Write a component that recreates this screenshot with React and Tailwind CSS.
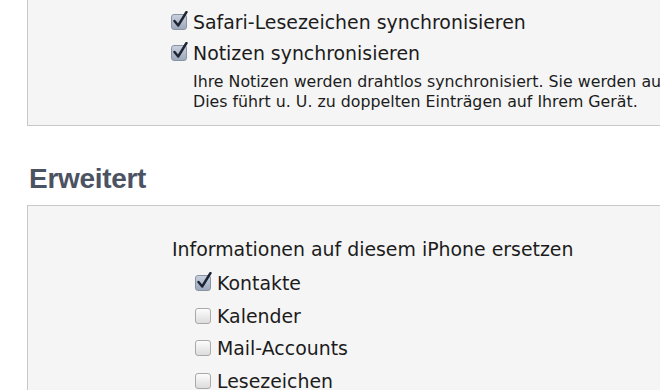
import React from 'react';

const Box = ({ checked }) => (
  <span className="relative inline-block w-[16px] h-[16px] shrink-0">
    <span
      className={
        checked
          ? 'absolute inset-0 rounded-[3px] border border-[#8a93a3] bg-gradient-to-b from-[#c9d1dd] to-[#9ca8bc]'
          : 'absolute inset-0 rounded-[3px] border border-[#a9a9a9] bg-gradient-to-b from-[#fdfdfd] to-[#dcdcdc]'
      }
    />
    {checked && (
      <svg className="absolute left-[2px] top-[-3px]" width="15" height="17" viewBox="0 0 15 17">
        <path d="M1.5 10 L5.2 14.5 L13.5 1" fill="none" stroke="#1d2433" strokeWidth="2.4" strokeLinecap="round" strokeLinejoin="round" />
      </svg>
    )}
  </span>
);

const Row = ({ checked, label, className = '' }) => (
  <div className={`flex items-center gap-[6px] ${className}`}>
    <Box checked={checked} />
    <span>{label}</span>
  </div>
);

export default function App() {
  return (
    <div className="w-[660px] h-[390px] overflow-hidden bg-white text-[#1c1c1c] text-[18.9px] font-['DejaVu_Sans',sans-serif]">
      <div className="ml-[27px] -mt-px h-[127px] border border-[#c8c8c8] border-r-0 bg-[#f5f5f5] pl-[143px] pt-[10px] whitespace-nowrap">
        <Row checked label="Safari-Lesezeichen synchronisieren" className="h-[24px]" />
        <Row checked label="Notizen synchronisieren" className="h-[24px] mt-[7px]" />
        <div className="pl-[22px] mt-[7px] text-[15.8px] leading-[20px]">
          <div>Ihre Notizen werden drahtlos synchronisiert. Sie werden auf</div>
          <div>Dies führt u. U. zu doppelten Einträgen auf Ihrem Gerät.</div>
        </div>
      </div>

      <h2 className="ml-[29px] mt-[33px] h-[40px] text-[28px] font-bold tracking-[-0.3px] text-[#4b5262] font-['Liberation_Sans',sans-serif] leading-[40px]">
        Erweitert
      </h2>

      <div className="ml-[27px] mt-[6px] h-[200px] border border-[#c8c8c8] border-r-0 bg-[#f5f5f5] pl-[144px] pt-[31px] whitespace-nowrap">
        <div className="h-[24px] leading-[24px]">Informationen auf diesem iPhone ersetzen</div>
        <div className="pl-[23px] mt-[10px] flex flex-col gap-[8.7px]">
          <Row checked label="Kontakte" className="h-[24px]" />
          <Row label="Kalender" className="h-[24px]" />
          <Row label="Mail-Accounts" className="h-[24px]" />
          <Row label="Lesezeichen" className="h-[24px]" />
        </div>
      </div>
    </div>
  );
}
